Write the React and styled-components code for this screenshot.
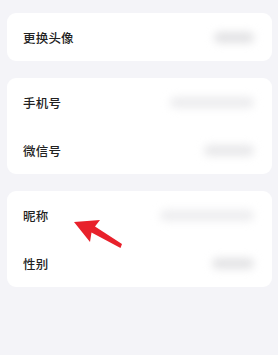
import React from 'react';
import styled, { createGlobalStyle } from 'styled-components';

const GlobalStyle = createGlobalStyle`
  html, body {
    margin: 0;
    padding: 0;
    background: #f4f4f8;
  }
  body {
    font-family: "Noto Sans CJK SC", "Noto Sans", sans-serif;
  }
`;

const Page = styled.div`
  position: relative;
  width: 278px;
  height: 355px;
  box-sizing: border-box;
  padding: 13px 6px 0 7px;
  display: flex;
  flex-direction: column;
  gap: 17px;
  background: #f4f4f8;
  overflow: hidden;
`;

const Card = styled.div`
  background: #ffffff;
  border-radius: 9px;
  display: flex;
  flex-direction: column;
`;

const Row = styled.div`
  height: 48px;
  display: flex;
  align-items: center;
  justify-content: space-between;
  padding: 0 18px 0 16px;
`;

const Label = styled.span`
  font-size: 12.5px;
  font-weight: 500;
  color: #222;
  letter-spacing: 0.2px;
`;

const Blurred = styled.span`
  display: block;
  width: ${({ w }) => w}px;
  height: 11px;
  border-radius: 6px;
  background: ${({ shade }) => shade || '#e4e4e6'};
  filter: blur(4px);
`;

const Arrow = styled.svg`
  position: absolute;
  left: 70px;
  top: 214px;
`;

const items = [
  [{ label: '更换头像', w: 40, shade: '#e2e2e4' }],
  [
    { label: '手机号', w: 84, shade: '#ececee' },
    { label: '微信号', w: 50, shade: '#e8e8ea' },
  ],
  [
    { label: '昵称', w: 94, shade: '#ededef' },
    { label: '性别', w: 42, shade: '#e3e3e5' },
  ],
];

const App = () => (
  <>
    <GlobalStyle />
    <Page>
      {items.map((group, i) => (
        <Card key={i}>
          {group.map((it) => (
            <Row key={it.label}>
              <Label>{it.label}</Label>
              <Blurred w={it.w} shade={it.shade} />
            </Row>
          ))}
        </Card>
      ))}
      {/* red pointer arrow */}
      <Arrow width="60" height="40" viewBox="0 0 60 40">
        <path
          d="M4 8 L30 6 L25 12.5 L52 30 L50.5 34 L21.5 18.5 L20 28 Z"
          fill="#e8212b"
        />
      </Arrow>
    </Page>
  </>
);

export default App;
